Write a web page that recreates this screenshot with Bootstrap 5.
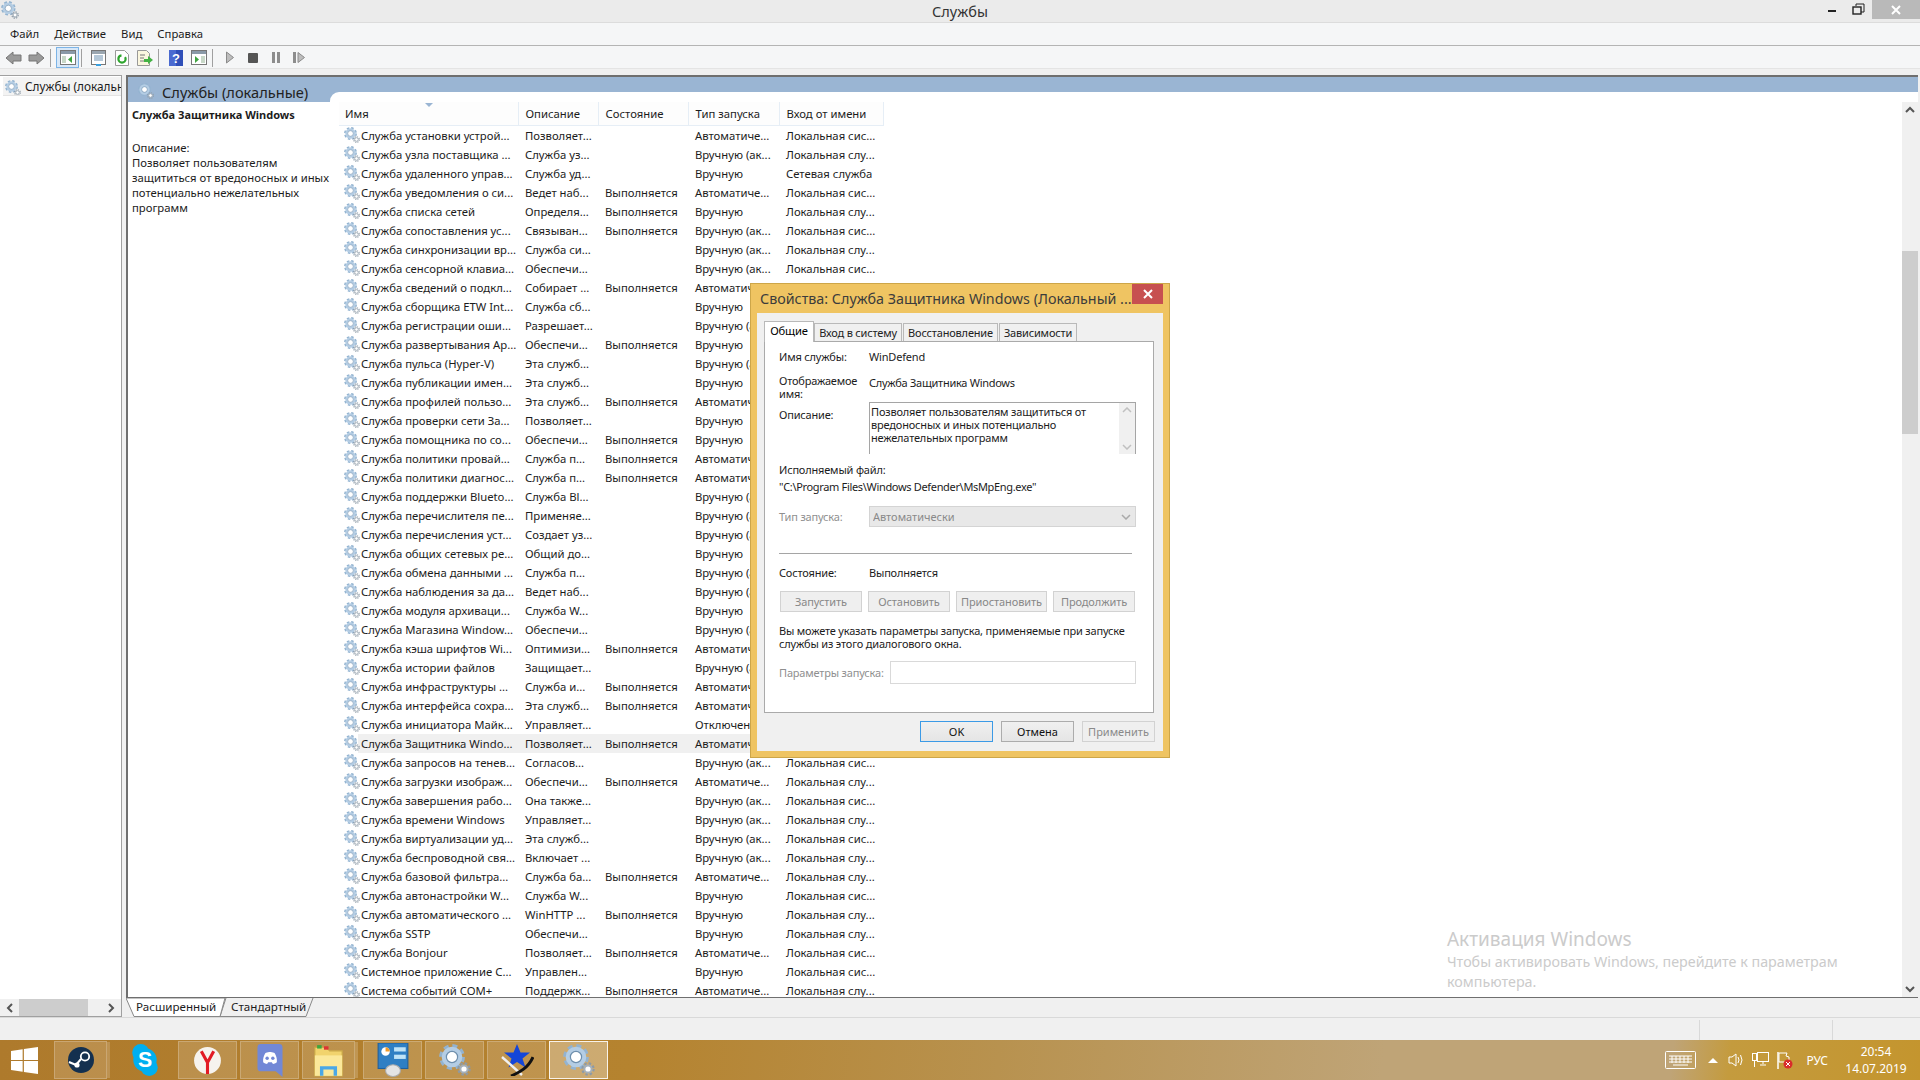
<!DOCTYPE html>
<html lang="ru">

<head>
  <meta charset="utf-8">
  <meta name="viewport" content="width=device-width">
  <title>Службы</title>
  <link href="https://cdn.jsdelivr.net/npm/bootstrap@5.3.3/dist/css/bootstrap.min.css" rel="stylesheet" />
  <style>
    html, body { height: 100%; margin: 0; overflow: hidden; }
    body { width: 1920px; height: 1080px; background: #f0f0f0; color: #1c1c1c; font: 11.3px/15px "Noto Sans", "Open Sans", sans-serif; }
    .title-bar { height: 23px; background: #ebebeb; border-bottom: 1px solid #dcdcdc; position: relative; }
    .title-text { font-size: 14.5px; line-height: 22px; color: #333; }
    .win-ctl { position: absolute; top: 0; right: 0; height: 19px; }
    .win-ctl span { display: block; height: 19px; }
    .win-x { width: 48px; background: #b9b9b9; }
    .menu-bar { height: 23px; background: #f5f6f7; border-bottom: 1px solid #b4b4b4; padding-left: 10px; line-height: 22px; }
    .menu-bar span { margin-right: 15px; }
    .tool-bar { height: 23px; background: #f5f6f7; border-bottom: 1px solid #e4e4e4; padding: 1px 0 0 2px; }
    .tb-i { width: 23px; height: 21px; }
    .tb-on { background: #d8e8f8; outline: 1px solid #7db4e6; outline-offset: -1px; }
    .tb-s { width: 1px; height: 18px; background: #a0a0a0; margin: 0 5px 0 2px; }
    .main-row { height: 942px; margin-top: 6px; }
    .tree-pane { width: 122px; background: #fff; border: 1px solid #a0a0a0; border-left: 0; }
    .tree-item { height: 19px; margin: 1px 0 0 3px; background: #f3f3f3; border-bottom: 1px solid #e4e4e4; font-size: 11.8px; line-height: 18px; white-space: nowrap; overflow: hidden; }
    .hscroll { height: 17px; background: #f0f0f0; padding: 0 0 0 6px; }
    .hthumb { width: 69px; height: 17px; background: #cdcdcd; margin: 0 19px 0 5px; }
    .right-col { width: 1792px; margin-left: 4px; }
    .svc-pane { height: 923px; background: #fff; border: solid #6f6f6f; border-width: 2px 0 1px 2px; width: 1792px; }
    .svc-head { height: 25px; background: #9ab5d3; padding-left: 10px; font-size: 14.6px; line-height: 30px; color: #222; }
    .svc-body { height: 895px; }
    .svc-info { width: 202px; padding: 5px 0 0 4px; line-height: 15px; }
    .svc-info b { display: block; font-size: 11px; margin-bottom: 18px; }
    .svc-list { margin-top: -10px; background: #fff; border-top-left-radius: 9px; overflow: hidden; position: relative; width: 1588px; height: 905px; }
    .tbl-wrap { width: 1572px; padding: 10px 0 0 9px; overflow: hidden; }
    .svc-table { table-layout: fixed; width: 544px; border-collapse: collapse; }
    .svc-table th { height: 23px; font-weight: 400; padding: 0 0 0 7px; border-right: 1px solid #e6eef6; border-bottom: 1px solid #e6eef6; background: #fdfdfd; white-space: nowrap; }
    .svc-table th:first-child { padding-left: 6px; }
    .svc-table td { height: 19px; line-height: 19px; padding: 0 0 0 7px; white-space: nowrap; overflow: hidden; }
    .svc-table td:first-child { padding-left: 5px; }
    .row-sel td { background: #f0f0f0; }
    .row-sel td:first-child { background: linear-gradient(90deg, transparent 19px, #f0f0f0 19px); }
    .gear16 { width: 16px; height: 16px; margin: -2px 1px 0 0; vertical-align: middle; }
    .sort-mark { position: absolute; left: 95px; top: 11px; width: 0; height: 0; border: 4px solid transparent; border-top: 4px solid #9ab5d3; border-bottom: 0; }
    .vscroll { width: 16px; margin-top: 10px; background: #f0f0f0; height: 895px; }
    .vthumb { height: 183px; margin-top: 132px; background: #cdcdcd; }
    .tab-strip { height: 19px; position: relative; padding-left: 10px; font-size: 11.6px; line-height: 18px; }
    .tab-shape { position: absolute; left: 0; top: 0; }
    .tab-a, .tab-b { position: relative; }
    .tab-a { width: 95px; }
    .status-bar { height: 23px; background: #f0f0f0; border-top: 1px solid #d9d9d9; }
    .st-sep { width: 1px; height: 20px; margin-top: 2px; background: #d9d9d9; }
    .task-bar { height: 40px; background: linear-gradient(96deg, #ae7a2c 0, #b5832f 33%, #b8924f 52%, #bfa477 72%, #bfa477 87%, #c49b3e 90%, #c4952e 100%); color: #fff; }
    .task-btn { width: 59px; height: 38px; margin: 1px 3px 1px 0; background: rgba(255, 255, 255, .15); border: 1px solid rgba(255, 255, 255, .22); }
    .task-stack { width: 53px; box-shadow: 4px 0 0 -1px rgba(255, 255, 255, .18); }
    .task-plain { width: 67px; margin-right: 0; background: none; border-color: transparent; }
    .task-act { background: rgba(255, 255, 255, .32); border: 1px solid rgba(255, 255, 255, .85); }
    .tray-txt { font-size: 12px; line-height: 17px; }
    .tr-k { margin-right: 12px; }
    .tr-t { margin-right: 10px; }
    .clock { width: 72px; margin: 0 8px 0 12px; }
    .wm-note { position: absolute; left: 1447px; top: 926px; color: #cbcbcb; font-size: 14.3px; line-height: 20px; }
    .wm-note div:first-child { font-size: 19px; line-height: 26px; }
    .dlg-win { position: absolute; left: 750px; top: 283px; width: 420px; height: 475px; background: #efc462; border: 1px solid #cda649; padding: 29px 6px 6px; }
    .dlg-title { position: absolute; left: 9px; top: 4px; font-size: 14.3px; line-height: 22px; color: #3c3c3c; white-space: nowrap; }
    .dlg-x { position: absolute; right: 6px; top: 0; width: 31px; height: 20px; background: #c75050; }
    .dlg-client { height: 438px; background: #f0f0f0; padding: 8px 9px 0 7px; }
    .dlg-tabs { height: 20px; border: 0; gap: 0; flex-wrap: nowrap; font-size: 11px; letter-spacing: -.18px; }
    .dlg-tabs .nav-link { height: 18px; margin: 2px 1px 0 0; padding: 0; border: 1px solid #b9b9b9; border-bottom: 0; border-radius: 0; background: #f0f0f0; color: #222; font-size: 11px; line-height: 17px; white-space: nowrap; text-align: center; }
    .dlg-tabs .nav-link.active { height: 21px; margin: 0; background: #fff; line-height: 18px; position: relative; z-index: 1; border-color: #b9b9b9; font-size: 11.2px; }
    .tab-w1 { width: 50px; }
    .tab-w2 { width: 88px; }
    .tab-w3 { width: 95px; }
    .tab-w4 { width: 78px; }
    .dlg-panel { height: 372px; width: 390px; background: #fff; border: 1px solid #aaa; padding: 8px 17px 0 14px; font-size: 11px; letter-spacing: -.18px; line-height: 13px; }
    .fld-lab { width: 90px; flex: none; }
    .dim-txt { color: #8f8f8f; }
    .tight-a { letter-spacing: -.28px; }
    .tight-b { letter-spacing: -.33px; }
    .desc-box { width: 267px; height: 52px; border: solid #a5a5a5; border-width: 1px 1px 0 1px; padding: 2px 0 0 1px; position: relative; }
    .desc-sb { position: absolute; right: 0; top: 0; bottom: 0; width: 16px; background: #f0f0f0; }
    .sel-box, .sel-box:disabled { width: 267px; height: 21px; background-color: #e8e8e8; background-image: url("data:image/svg+xml,%3csvg xmlns='http://www.w3.org/2000/svg' viewBox='0 0 10 6'%3e%3cpath d='M1 1l4 4 4-4' fill='none' stroke='%23aaa' stroke-width='1.500'/%3e%3c/svg%3e"); background-position: right 4px center; background-size: 10px; border: 1px solid #d4d4d4; border-radius: 0; padding: 0 3px; color: #8a8a8a; font-size: 11px; line-height: 19px; box-shadow: none; opacity: 1; }
    .hr-line { width: 353px; height: 1px; background: #a5a5a5; }
    .d-btn, .d-btn:disabled { height: 21px; padding: 0; border-radius: 0; font-size: 11px; letter-spacing: -.1px; line-height: 19px; color: #888; background: #efefef; border: 1px solid #d2d2d2; opacity: 1; }
    .par-box { width: 246px; height: 23px; background: #fff; border: 1px solid #d9d9d9; border-radius: 0; padding: 0; }
    .par-box:disabled { background: #fff; }
    .dlg-foot { padding: 8px 0 0 0; gap: 8px; margin-right: -1px; }
    .f-btn { width: 73px; height: 21px; padding: 0; border-radius: 0; font-size: 11px; line-height: 19px; color: #111; background: linear-gradient(#f0f0f0, #e5e5e5); border: 1px solid #acacac; }
    .f-ok { border-color: #3b9ae6; }
    .f-off, .f-off:disabled { color: #8a8a8a; background: #efefef; border-color: #d2d2d2; opacity: 1; }
  </style>
</head>

<body class="d-flex flex-column position-relative">
  <svg width="0" height="0" class="position-absolute">
    <defs>
      <symbol id="gear" viewBox="0 0 32 32">
        <circle cx="13" cy="13" r="11.2" fill="none" stroke="#93b3d0" stroke-width="3.4" stroke-dasharray="5 3.8" />
        <circle cx="13" cy="13" r="8" fill="none" stroke="#b4cde4" stroke-width="4.6" />
        <circle cx="13" cy="13" r="5.6" fill="#fff" stroke="#6d8fae" stroke-width="1.2" />
        <circle cx="25" cy="25" r="5.6" fill="none" stroke="#8d9aa6" stroke-width="2.2" stroke-dasharray="2.4 2" />
        <circle cx="25" cy="25" r="3.6" fill="#fff" stroke="#a5b0ba" stroke-width="2" />
      </symbol>
    </defs>
  </svg>

  <div class="title-bar d-flex justify-content-center flex-shrink-0">
    <svg class="position-absolute" style="left:1px;top:1px" width="18" height="18"><use href="#gear" /></svg>
    <span class="title-text">Службы</span>
    <div class="win-ctl d-flex align-items-start">
      <svg width="58" height="19">
        <rect x="14" y="10" width="8" height="2" fill="#222" />
        <rect x="39" y="7" width="8" height="7" fill="none" stroke="#222" stroke-width="1.4" />
        <path d="M42 6V4h8v8h-3" fill="none" stroke="#222" />
      </svg>
      <span class="win-x d-flex align-items-center justify-content-center">
        <svg width="12" height="10"><path d="M2 1l8 8M10 1l-8 8" stroke="#fff" stroke-width="2" /></svg>
      </span>
    </div>
  </div>

  <div class="menu-bar d-flex flex-shrink-0">
    <span>Файл</span><span>Действие</span><span>Вид</span><span>Справка</span>
  </div>

  <div class="tool-bar d-flex align-items-center flex-shrink-0">
    <div class="tb-i d-flex align-items-center justify-content-center"><svg width="17" height="14"><path d="M1 7l7-6v3h8v6H8v3z" fill="#9a9a9a" stroke="#777" /></svg></div>
    <div class="tb-i d-flex align-items-center justify-content-center"><svg width="17" height="14"><path d="M16 7L9 1v3H1v6h8v3z" fill="#9a9a9a" stroke="#777" /></svg></div>
    <div class="tb-s"></div>
    <div class="tb-i tb-on d-flex align-items-center justify-content-center"><svg width="16" height="15"><rect x=".5" y=".5" width="15" height="14" fill="#fff" stroke="#777" /><rect x="1" y="1" width="14" height="3" fill="#8a9aa8" /><rect x="2" y="6" width="4" height="7" fill="#c8d8c8" /><path d="M12 6v7l-4-3.5z" fill="#3fa33f" /></svg></div>
    <div class="tb-s"></div>
    <div class="tb-i d-flex align-items-center justify-content-center"><svg width="15" height="16"><rect x=".5" y=".5" width="14" height="14" fill="#fff" stroke="#777" /><rect x="1" y="1" width="13" height="3" fill="#9aa6b0" /><path d="M3 6h9M3 8h9M3 10h9" stroke="#6a90b0" /><rect x="5" y="14" width="5" height="2" fill="#38a0e0" /></svg></div>
    <div class="tb-i d-flex align-items-center justify-content-center"><svg width="14" height="16"><path d="M.5.5h9l4 4v11H.5z" fill="#fff" stroke="#999" /><circle cx="7" cy="9" r="3.6" fill="none" stroke="#2da52d" stroke-width="2.2" stroke-dasharray="16 4" /></svg></div>
    <div class="tb-i d-flex align-items-center justify-content-center"><svg width="16" height="16"><path d="M.5.5h9l3 3v12H.5z" fill="#fbf7df" stroke="#999" /><path d="M3 5h5M3 8h4M3 11h4" stroke="#777" /><path d="M7 9h4V6l5 4-5 4v-2H7z" fill="#43b243" /></svg></div>
    <div class="tb-s"></div>
    <div class="tb-i d-flex align-items-center justify-content-center"><svg width="14" height="16"><rect width="14" height="16" fill="#2f4fb8" /><rect x="0" y="0" width="7" height="16" fill="#4a6ad0" /><text x="7" y="13" text-anchor="middle" fill="#fff" font-family="Liberation Sans" font-weight="700" font-size="13">?</text></svg></div>
    <div class="tb-i d-flex align-items-center justify-content-center"><svg width="16" height="15"><rect x=".5" y=".5" width="15" height="14" fill="#fff" stroke="#777" /><rect x="1" y="1" width="14" height="3" fill="#8a9aa8" /><rect x="10" y="6" width="4" height="7" fill="#c8d8c8" /><path d="M4 6v7l4-3.5z" fill="#3fa33f" /></svg></div>
    <div class="tb-s"></div>
    <div class="tb-i d-flex align-items-center justify-content-center"><svg width="8" height="13"><path d="M.5 1v11L7.5 6.500z" fill="#bdbdbd" stroke="#8a8a8a" /></svg></div>
    <div class="tb-i d-flex align-items-center justify-content-center"><svg width="10" height="10"><rect width="10" height="10" rx="1" fill="#555" /></svg></div>
    <div class="tb-i d-flex align-items-center justify-content-center"><svg width="8" height="11"><rect width="3" height="11" fill="#8d8d8d" /><rect x="5" width="3" height="11" fill="#8d8d8d" /></svg></div>
    <div class="tb-i d-flex align-items-center justify-content-center"><svg width="12" height="11"><rect width="3" height="11" fill="#8d8d8d" /><path d="M5 .5v10l6.500-5z" fill="#bdbdbd" stroke="#8a8a8a" /></svg></div>
  </div>

  <div class="main-row d-flex flex-shrink-0">
    <div class="tree-pane d-flex flex-column justify-content-between flex-shrink-0">
      <div class="tree-item"><svg class="gear16" style="margin:0 4px 0 2px"><use href="#gear" /></svg>Службы (локальные)</div>
      <div class="hscroll d-flex align-items-center">
        <svg width="8" height="10"><path d="M6 1L2 5l4 4" fill="none" stroke="#555" stroke-width="2" /></svg>
        <div class="hthumb"></div>
        <svg width="8" height="10"><path d="M2 1l4 4-4 4" fill="none" stroke="#555" stroke-width="2" /></svg>
      </div>
    </div>

    <div class="right-col">
      <div class="svc-pane">
        <div class="svc-head d-flex">
          <svg width="16" height="16" style="margin:6px 8px 0 0"><use href="#gear" /></svg>
          <span>Службы (локальные)</span>
        </div>
        <div class="svc-body d-flex">
          <div class="svc-info">
            <b>Служба Защитника Windows</b>
            Описание:<br>
            Позволяет пользователям<br>
            защититься от вредоносных и иных<br>
            потенциально нежелательных<br>
            программ
          </div>
          <div class="svc-list d-flex">
            <span class="sort-mark"></span>
            <div class="tbl-wrap">
              <table class="svc-table">
                <colgroup><col style="width:179px"><col style="width:80px"><col style="width:90px"><col style="width:91px"><col style="width:104px"></colgroup>
                <thead><tr><th>Имя</th><th>Описание</th><th>Состояние</th><th>Тип запуска</th><th>Вход от имени</th></tr></thead>
                <tbody id="svcRows"></tbody>
              </table>
            </div>
            <div class="vscroll d-flex flex-column">
              <svg width="16" height="17" class="flex-shrink-0"><path d="M4 10l4-4 4 4" fill="none" stroke="#555" stroke-width="2" /></svg>
              <div class="vthumb flex-shrink-0"></div>
              <svg width="16" height="17" class="flex-shrink-0 mt-auto"><path d="M4 7l4 4 4-4" fill="none" stroke="#555" stroke-width="2" /></svg>
            </div>
          </div>
        </div>
      </div>
      <div class="tab-strip d-flex">
        <svg class="tab-shape" width="200" height="19">
          <path d="M94 18.500H180L187 0" fill="none" stroke="#888" />
          <path d="M94 18.500L100 0" fill="none" stroke="#888" />
          <path d="M0 0L8 18.500H94L99 0z" fill="#fff" stroke="#888" />
        </svg>
        <span class="tab-a">Расширенный</span><span class="tab-b">Стандартный</span>
      </div>
    </div>
  </div>

  <div class="status-bar d-flex flex-shrink-0">
    <div class="st-sep" style="margin-left:1699px"></div>
    <div class="st-sep" style="margin-left:132px"></div>
  </div>

  <div class="task-bar d-flex align-items-center flex-shrink-0">
    <svg width="27" height="27" viewBox="0 0 22 24" preserveAspectRatio="none" style="margin:0 16px 0 11px"><path d="M0 3.500L9.500 2v9.500H0zM10.500 1.800L22 0v11.500H10.500zM0 12.500h9.500V22L0 20.500zM10.500 12.500H22V24l-11.500-1.800z" fill="#fff" /></svg>
    <div class="task-btn task-stack d-flex align-items-center justify-content-center" style="margin-right:4px">
      <svg width="30" height="30" viewBox="0 0 26 30" preserveAspectRatio="xMidYMid meet"><circle cx="13" cy="15" r="13" fill="#14304f" /><circle cx="17" cy="11.500" r="4.200" fill="none" stroke="#fff" stroke-width="1.800" /><path d="M1 17l7 3 5-6" fill="none" stroke="#fff" stroke-width="2" /><circle cx="9" cy="20" r="2.600" fill="#fff" /></svg>
    </div>
    <div class="task-btn task-plain d-flex align-items-center justify-content-center">
      <svg width="30" height="34" viewBox="0 0 26 32"><circle cx="9" cy="9" r="8" fill="#00aff0" /><circle cx="17" cy="23" r="8" fill="#00aff0" /><circle cx="13" cy="16" r="11" fill="#00aff0" /><text x="13" y="23" text-anchor="middle" fill="#fff" font-family="Liberation Sans" font-weight="700" font-size="20">S</text></svg>
    </div>
    <div class="task-btn d-flex align-items-center justify-content-center">
      <svg width="31" height="31" viewBox="0 0 26 30"><circle cx="13" cy="15" r="13" fill="#f6f3ee" /><path d="M7 6l6 11M19 6l-6 11v11" fill="none" stroke="#e21b24" stroke-width="3" /></svg>
    </div>
    <div class="task-btn d-flex align-items-center justify-content-center">
      <svg width="26" height="33" viewBox="0 0 22 29"><path d="M3 0h16a3 3 0 0 1 3 3v26l-6-5H3a3 3 0 0 1-3-3V3a3 3 0 0 1 3-3z" fill="#7288d6" /><path d="M5 16c-.4-3 .6-6 2-8 2-1 3-1 4-1s2 0 4 1c1.400 2 2.400 5 2 8-1.200 1-2.400 1.500-3.400 1.500l-1-1.500h-3.200l-1 1.500C7.400 17.500 6.200 17 5 16z" fill="#fff" /><circle cx="8.500" cy="12.500" r="1.500" fill="#7288d6" /><circle cx="13.500" cy="12.500" r="1.500" fill="#7288d6" /></svg>
    </div>
    <div class="task-btn task-stack d-flex align-items-center justify-content-center" style="margin-right:8px">
      <svg width="31" height="33" viewBox="0 0 26 29"><path d="M1 3h10l3 3h11v22H1z" fill="#f1d36d" stroke="#caa848" /><rect x="3" y="1" width="4" height="3" fill="#3da63d" /><rect x="9" y="2" width="4" height="3" fill="#d33" /><path d="M1 10h24v18H1z" fill="#fbe89a" /><path d="M7 28v-7h12v7" fill="none" stroke="#4aa7e6" stroke-width="3" /></svg>
    </div>
    <div class="task-btn d-flex align-items-center justify-content-center">
      <svg width="32" height="34" viewBox="0 0 28 32"><rect x="0" y="0" width="28" height="24" fill="#2f7fc4" stroke="#1f5f9c" /><circle cx="7" cy="8" r="4" fill="#fff" /><path d="M7 8V4a4 4 0 0 1 4 4z" fill="#f09a2a" /><rect x="15" y="4" width="11" height="4" fill="#bfe3f7" /><rect x="15" y="11" width="11" height="4" fill="#bfe3f7" /><ellipse cx="14" cy="26" rx="7" ry="5.500" fill="#e4e4e4" stroke="#aaa" /></svg>
    </div>
    <div class="task-btn d-flex align-items-center justify-content-center"><svg width="32" height="32"><use href="#gear" /></svg></div>
    <div class="task-btn d-flex align-items-center justify-content-center">
      <svg width="34" height="32"><path d="M17 0l3.500 8.500H30l-7.500 6 3 9-8.500-5.500L8.500 23.500l3-9L4 8.500h9.500z" fill="#1446d8" /><path d="M2 13l20 18" stroke="#f0f0f0" stroke-width="2.400" /><path d="M33 13C28 24 20 28 11 32" fill="none" stroke="#111" stroke-width="3" /></svg>
    </div>
    <div class="task-btn task-act d-flex align-items-center justify-content-center"><svg width="32" height="32"><use href="#gear" /></svg></div>

    <div class="ms-auto d-flex align-items-center">
      <svg width="31" height="18" class="tr-k"><rect x=".5" y=".5" width="30" height="17" rx="1" fill="none" stroke="#fff" /><path d="M4 5h23M4 8h23M4 11h23M7 5v7M11 5v7M15 5v7M19 5v7M23 5v7M8 14h15" stroke="#fff" /></svg>
      <svg width="10" height="6" class="tr-t"><path d="M0 6l5-5 5 5z" fill="#fff" /></svg>
      <svg width="16" height="14" class="me-2"><path d="M1 4h3l4-3v12l-4-3H1z" fill="none" stroke="#fff" /><path d="M10 4q2 3 0 6M12.500 2q3 5 0 10" fill="none" stroke="#fff" /></svg>
      <svg width="17" height="16" class="me-2"><rect x="5.500" y=".5" width="11" height="9" fill="none" stroke="#fff" /><path d="M11 10v2M8 13h6" stroke="#fff" /><rect x=".5" y="1.500" width="4" height="7" fill="none" stroke="#fff" /><path d="M2.500 9v6" stroke="#fff" /></svg>
      <svg width="16" height="17" style="margin-right:13px"><path d="M1 0v17" stroke="#fff" stroke-width="1.500" /><path d="M2 1h8l-1 3 3 1v5H2z" fill="none" stroke="#fff" /><circle cx="11" cy="12" r="4.500" fill="#d92b2b" /><path d="M9 10l4 4M13 10l-4 4" stroke="#fff" /></svg>
      <span class="tray-txt">РУС</span>
      <div class="clock tray-txt text-center"><div>20:54</div><div>14.07.2019</div></div>
    </div>
  </div>

  <div class="wm-note">
    <div>Активация Windows</div>
    <div>Чтобы активировать Windows, перейдите к параметрам<br>компьютера.</div>
  </div>

  <div class="dlg-win">
    <div class="dlg-title">Свойства: Служба Защитника Windows (Локальный ...</div>
    <div class="dlg-x d-flex align-items-center justify-content-center"><svg width="10" height="10"><path d="M1 1l8 8M9 1l-8 8" stroke="#fff" stroke-width="2" /></svg></div>
    <div class="dlg-client">
      <ul class="nav nav-tabs dlg-tabs">
        <li class="nav-item"><span class="nav-link active tab-w1">Общие</span></li>
        <li class="nav-item"><span class="nav-link tab-w2">Вход в систему</span></li>
        <li class="nav-item"><span class="nav-link tab-w3">Восстановление</span></li>
        <li class="nav-item"><span class="nav-link tab-w4">Зависимости</span></li>
      </ul>
      <div class="dlg-panel">
        <div class="d-flex"><div class="fld-lab">Имя службы:</div><div>WinDefend</div></div>
        <div class="d-flex" style="margin-top:11px;height:26px"><div class="fld-lab">Отображаемое имя:</div><div class="tight-a" style="padding-top:2px">Служба Защитника Windows</div></div>
        <div class="d-flex" style="margin-top:2px"><div class="fld-lab" style="padding-top:6px">Описание:</div>
          <div class="desc-box">Позволяет пользователям защититься от<br>вредоносных и иных потенциально<br>нежелательных программ
            <div class="desc-sb d-flex flex-column justify-content-between align-items-center py-1">
              <svg width="10" height="6"><path d="M1 5l4-4 4 4" fill="none" stroke="#c0c0c0" stroke-width="1.500" /></svg>
              <svg width="10" height="6"><path d="M1 1l4 4 4-4" fill="none" stroke="#c0c0c0" stroke-width="1.500" /></svg>
            </div>
          </div>
        </div>
        <div style="margin-top:9px">Исполняемый файл:</div>
        <div class="tight-b" style="margin-top:4px">"C:\Program Files\Windows Defender\MsMpEng.exe"</div>
        <div class="d-flex align-items-center" style="margin-top:13px"><div class="fld-lab dim-txt">Тип запуска:</div>
          <select class="form-select sel-box" disabled><option>Автоматически</option></select>
        </div>
        <div class="hr-line" style="margin-top:26px"></div>
        <div class="d-flex" style="margin-top:12px"><div class="fld-lab">Состояние:</div><div>Выполняется</div></div>
        <div class="d-flex" style="margin:12px 0 0 1px;gap:6px">
          <button class="btn d-btn" style="width:82px" disabled>Запустить</button>
          <button class="btn d-btn" style="width:82px" disabled>Остановить</button>
          <button class="btn d-btn" style="width:91px" disabled>Приостановить</button>
          <button class="btn d-btn" style="width:82px" disabled>Продолжить</button>
        </div>
        <div style="margin-top:12px">Вы можете указать параметры запуска, применяемые при запуске<br>службы из этого диалогового окна.</div>
        <div class="d-flex align-items-center justify-content-between" style="margin-top:11px"><div class="dim-txt">Параметры запуска:</div>
          <input class="form-control par-box" type="text" disabled>
        </div>
      </div>
      <div class="dlg-foot d-flex justify-content-end">
        <button class="btn f-btn f-ok">OK</button>
        <button class="btn f-btn">Отмена</button>
        <button class="btn f-btn f-off" disabled>Применить</button>
      </div>
    </div>
  </div>

  <script src="https://cdn.jsdelivr.net/npm/bootstrap@5.3.3/dist/js/bootstrap.bundle.min.js"></script>
  <script>
    // имя | описание | состояние | тип запуска | вход
    const svcData = `Служба установки устрой...|Позволяет...||Автоматиче...|Локальная сис...
Служба узла поставщика ...|Служба уз...||Вручную (ак...|Локальная слу...
Служба удаленного управ...|Служба уд...||Вручную|Сетевая служба
Служба уведомления о си...|Ведет наб...|Выполняется|Автоматиче...|Локальная сис...
Служба списка сетей|Определя...|Выполняется|Вручную|Локальная слу...
Служба сопоставления ус...|Связыван...|Выполняется|Вручную (ак...|Локальная сис...
Служба синхронизации вр...|Служба си...||Вручную (ак...|Локальная слу...
Служба сенсорной клавиа...|Обеспечи...||Вручную (ак...|Локальная сис...
Служба сведений о подкл...|Собирает ...|Выполняется|Автоматиче...|Локальная сис...
Служба сборщика ETW Int...|Служба сб...||Вручную|Локальная сис...
Служба регистрации оши...|Разрешает...||Вручную (ак...|Локальная сис...
Служба развертывания Ap...|Обеспечи...|Выполняется|Вручную|Локальная сис...
Служба пульса (Hyper-V)|Эта служб...||Вручную (ак...|Локальная сис...
Служба публикации имен...|Эта служб...||Вручную|Локальная слу...
Служба профилей пользо...|Эта служб...|Выполняется|Автоматиче...|Локальная сис...
Служба проверки сети За...|Позволяет...||Вручную|Локальная слу...
Служба помощника по со...|Обеспечи...|Выполняется|Вручную|Локальная сис...
Служба политики провай...|Служба п...|Выполняется|Автоматиче...|Локальная слу...
Служба политики диагнос...|Служба п...|Выполняется|Автоматиче...|Локальная слу...
Служба поддержки Blueto...|Служба Bl...||Вручную (ак...|Локальная слу...
Служба перечислителя пе...|Применяе...||Вручную (ак...|Локальная сис...
Служба перечисления уст...|Создает уз...||Вручную (ак...|Локальная сис...
Служба общих сетевых ре...|Общий до...||Вручную|Локальная сис...
Служба обмена данными ...|Служба п...||Вручную (ак...|Локальная сис...
Служба наблюдения за да...|Ведет наб...||Вручную (ак...|Локальная сис...
Служба модуля архиваци...|Служба W...||Вручную|Локальная сис...
Служба Магазина Window...|Обеспечи...||Вручную (ак...|Локальная сис...
Служба кэша шрифтов Wi...|Оптимизи...|Выполняется|Автоматиче...|Локальная слу...
Служба истории файлов|Защищает...||Вручную (ак...|Локальная сис...
Служба инфраструктуры ...|Служба и...|Выполняется|Автоматиче...|Локальная сис...
Служба интерфейса сохра...|Эта служб...|Выполняется|Автоматиче...|Локальная сис...
Служба инициатора Майк...|Управляет...||Отключена|Локальная сис...
Служба Защитника Windo...|Позволяет...|Выполняется|Автоматиче...|Локальная сис...
Служба запросов на тенев...|Согласов...||Вручную (ак...|Локальная сис...
Служба загрузки изображ...|Обеспечи...|Выполняется|Автоматиче...|Локальная слу...
Служба завершения рабо...|Она также...||Вручную (ак...|Локальная сис...
Служба времени Windows|Управляет...||Вручную (ак...|Локальная слу...
Служба виртуализации уд...|Эта служб...||Вручную (ак...|Локальная сис...
Служба беспроводной свя...|Включает ...||Вручную (ак...|Локальная слу...
Служба базовой фильтра...|Служба ба...|Выполняется|Автоматиче...|Локальная слу...
Служба автонастройки W...|Служба W...||Вручную|Локальная сис...
Служба автоматического ...|WinHTTP ...|Выполняется|Вручную|Локальная слу...
Служба SSTP|Обеспечи...||Вручную|Локальная слу...
Служба Bonjour|Позволяет...|Выполняется|Автоматиче...|Локальная сис...
Системное приложение С...|Управлен...||Вручную|Локальная сис...
Система событий COM+|Поддержк...|Выполняется|Автоматиче...|Локальная слу...`

    const svcRows = document.querySelector("#svcRows")
    svcData.split("\n").forEach((line) => {
      const [name, desc, state, start, logon] = line.split("|")
      const row = document.createElement("tr")
      if (name.startsWith("Служба Защитника")) row.className = "row-sel"
      row.innerHTML = `<td><svg class="gear16"><use href="#gear" /></svg>${name}</td><td>${desc}</td><td>${state}</td><td>${start}</td><td>${logon}</td>`
      svcRows.appendChild(row)
    })
  </script>
</body>

</html>
